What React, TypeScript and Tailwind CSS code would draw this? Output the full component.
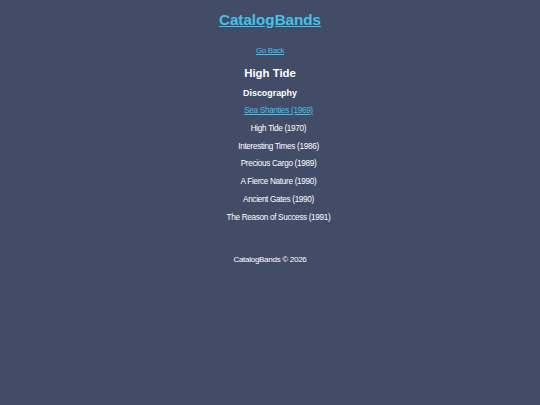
import React from "react";

const albums = [
  "High Tide (1970)",
  "Interesting Times (1986)",
  "Precious Cargo (1989)",
  "A Fierce Nature (1990)",
  "Ancient Gates (1990)",
  "The Reason of Success (1991)",
];

export default function App() {
  return (
    <div
      className="w-[540px] h-[405px] bg-[#424c66] text-white flex flex-col items-center"
      style={{ fontFamily: '"Liberation Sans", Arial, sans-serif' }}
    >
      <header className="pt-[8px]">
        <a href="#" className="text-[15.2px] leading-[20px] font-bold text-[#3fc3ea] underline">
          CatalogBands
        </a>
      </header>

      <main className="flex flex-col items-center mt-[14px]">
        <a href="#" className="text-[8px] leading-[10px] tracking-[-0.35px] text-[#3fc3ea] underline">
          Go Back
        </a>
        <h1 className="mt-[10px] text-[11.4px] leading-[14px] font-bold">High Tide</h1>
        <h2 className="mt-[7px] text-[8.9px] leading-[12px] font-bold">Discography</h2>
        <ul className="mt-[7px] pl-[17px] flex flex-col items-center text-[8.2px] leading-[10px] tracking-[-0.32px]">
          <li className="h-[17.8px]">
            <a href="#" className="text-[#3fc3ea] underline">
              Sea Shanties (1969)
            </a>
          </li>
          {albums.map((a) => (
            <li key={a} className="h-[17.8px]">
              {a}
            </li>
          ))}
        </ul>
      </main>

      <footer className="mt-[24px] text-[8px] leading-[10px] tracking-[-0.28px]">CatalogBands © 2026</footer>
    </div>
  );
}
